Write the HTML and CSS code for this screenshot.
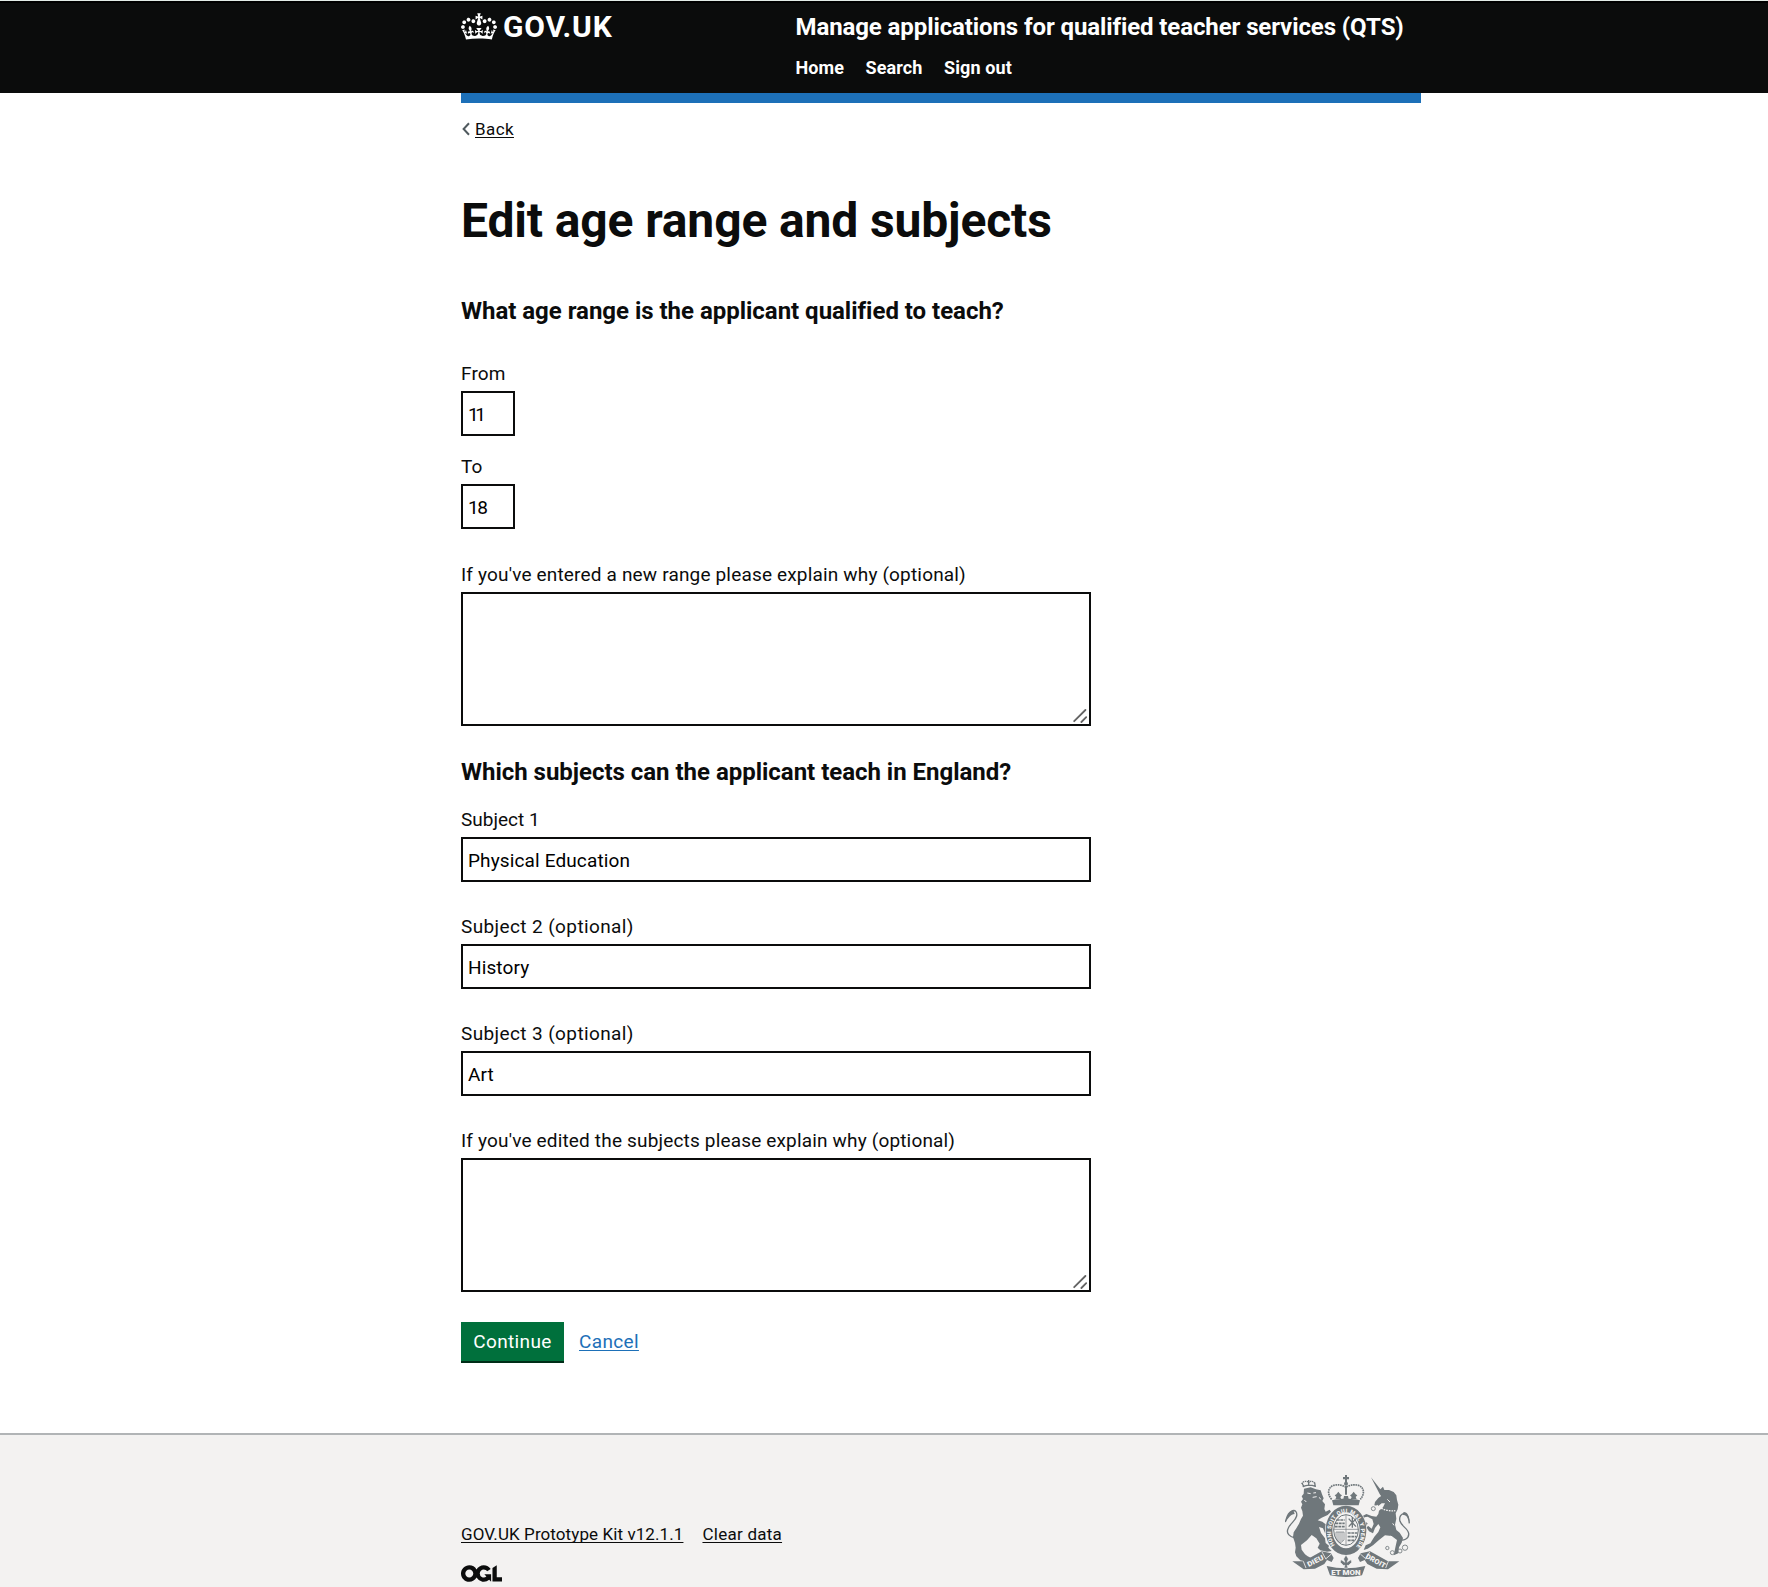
FILE: index.html
```html
<!DOCTYPE html>
<html lang="en">
<head>
<meta charset="utf-8">
<title>Edit age range and subjects</title>
<link rel="stylesheet" href="styles.css">
</head>
<body>
<header class="header">
  <div class="container header-row">
    <a class="logo">
      <svg class="crown" viewBox="0 0 132 97" width="36" height="27"><path fill="currentColor" fill-rule="evenodd" d="M25 30.2c3.5 1.5 7.7-.2 9.1-3.7 1.5-3.6-.2-7.8-3.9-9.2-3.6-1.4-7.6.3-9.1 3.9-1.4 3.5.3 7.5 3.9 9zM9 39.5c3.6 1.5 7.8-.2 9.2-3.7 1.5-3.6-.2-7.8-3.9-9.1-3.6-1.5-7.6.2-9.1 3.8-1.4 3.5.3 7.5 3.8 9zM4.4 57.2c3.5 1.5 7.7-.2 9.1-3.8 1.5-3.6-.2-7.7-3.9-9.1-3.5-1.5-7.6.3-9.1 3.8-1.4 3.5.3 7.6 3.9 9.1zm38.3-21.4c3.5 1.5 7.7-.2 9.1-3.8 1.5-3.6-.2-7.7-3.9-9.1-3.6-1.5-7.6.3-9.1 3.8-1.3 3.6.4 7.7 3.9 9.1zm64.4-5.6c-3.6 1.5-7.8-.2-9.1-3.7-1.5-3.6.2-7.8 3.8-9.2 3.6-1.4 7.7.3 9.2 3.9 1.3 3.5-.4 7.5-3.9 9zm15.9 9.3c-3.6 1.5-7.7-.2-9.1-3.7-1.5-3.6.2-7.8 3.7-9.1 3.6-1.5 7.7.2 9.2 3.8 1.5 3.5-.3 7.5-3.8 9zm4.7 17.7c-3.6 1.5-7.8-.2-9.2-3.8-1.5-3.6.2-7.7 3.9-9.1 3.6-1.5 7.7.3 9.2 3.8 1.3 3.5-.4 7.6-3.9 9.1zM89.3 35.8c-3.6 1.5-7.8-.2-9.2-3.8-1.4-3.6.2-7.7 3.9-9.1 3.6-1.5 7.7.3 9.2 3.8 1.4 3.6-.3 7.7-3.9 9.1zM69.7 17.7l8.9 4.7V9.3l-8.9 2.8c-.2-.3-.5-.6-.9-.9L72.4 0H59.6l3.5 11.2c-.3.3-.6.5-.9.9l-8.8-2.8v13.1l8.8-4.7c.3.3.6.7.9.9l-5 15.4v.1c-.2.8-.4 1.6-.4 2.4 0 4.1 3.1 7.5 7 8.1h.2c.3 0 .7.1 1 .1.4 0 .7 0 1-.1h.2c4-.6 7.1-4.1 7.1-8.1 0-.8-.1-1.7-.4-2.4V34l-5.1-15.4c.4-.2.7-.6 1-.9zM66 92.8c16.9 0 32.8 1.1 47.1 3.2 4-16.9 8.9-26.7 14-33.5l-9.6-3.4c1 4.9 1.1 7.2 0 10.2-1.5-1.4-3-4.3-4.2-8.7L108.6 76c2.8-2 5-3.2 7.5-3.3-4.4 9.4-10 11.9-13.6 11.2-4.3-.8-6.3-4.6-5.6-7.9 1-4.7 5.7-5.9 8-.5 4.3-8.7-3-11.4-7.6-8.8 7.1-7.2 7.9-13.5 2.1-21.1-8 6.1-8.1 12.3-4.5 20.8-4.7-5.4-12.1-2.5-9.5 6.2 3.4-5.2 7.9-2 7.2 3.1-.6 4.3-6.4 7.8-13.5 7.2-10.3-.9-10.9-8-11.2-13.8 2.5-.5 7.1 1.8 11 7.3L80.2 60c-4.1 4.4-8 5.3-12.3 5.4 1.4-4.4 8-11.6 8-11.6H55.5s6.4 7.2 7.9 11.6c-4.2-.1-8-1-12.3-5.4l1.4 16.4c3.9-5.5 8.5-7.7 10.9-7.3-.3 5.8-.9 12.8-11.1 13.8-7.2.6-12.9-2.9-13.5-7.2-.7-5 3.8-8.3 7.1-3.1 2.7-8.7-4.6-11.6-9.4-6.2 3.7-8.5 3.6-14.7-4.6-20.8-5.8 7.6-5 13.9 2.2 21.1-4.7-2.6-11.9.1-7.7 8.8 2.3-5.5 7.1-4.2 8.1.5.7 3.3-1.3 7.1-5.7 7.9-3.5.7-9-1.8-13.5-11.2 2.5.1 4.7 1.3 7.5 3.3l-4.7-15.4c-1.2 4.4-2.7 7.2-4.3 8.7-1.1-3-.9-5.3 0-10.2l-9.5 3.4c5 6.9 9.9 16.7 14 33.5 14.8-2.1 30.8-3.2 47.7-3.2z"/></svg>
      <span class="logo-text">GOV.UK</span>
    </a>
    <div class="service">
      <a class="service-name">Manage applications for qualified teacher services (QTS)</a>
      <nav class="nav"><a>Home</a><a>Search</a><a>Sign out</a></nav>
    </div>
  </div>
</header>
<div class="container">
  <div class="header-bar"></div>
  <a class="back"><svg class="chevron" width="8" height="14" viewBox="0 0 8 14"><path d="M7 1.2 1.6 7 7 12.8" fill="none" stroke="#505a5f" stroke-width="2"/></svg><span class="back-text">Back</span></a>
  <main class="main">
    <h1 class="title">Edit age range and subjects</h1>
    <h2 class="heading">What age range is the applicant qualified to teach?</h2>
    <div class="group group-from">
      <label class="label" for="from">From</label>
      <input class="input input-short input-eleven" id="from" value="11">
    </div>
    <div class="group group-to">
      <label class="label" for="to">To</label>
      <input class="input input-short" id="to" value="18">
    </div>
    <div class="group group-area">
      <label class="label" for="why-range">If you've entered a new range please explain why (optional)</label>
      <div class="area-wrap"><textarea class="area" id="why-range"></textarea><svg class="grip" width="14" height="15" viewBox="0 0 14 15"><path d="M1.2 13.2 12.4 2M8.4 14l4.8-4.8" fill="none" stroke="#636363" stroke-width="1.8" stroke-linecap="round"/></svg></div>
    </div>
    <h2 class="heading heading-subjects">Which subjects can the applicant teach in England?</h2>
    <div class="group">
      <label class="label label-first" for="s1">Subject 1</label>
      <input class="input" id="s1" value="Physical Education">
    </div>
    <div class="group">
      <label class="label label-wide" for="s2">Subject 2 (optional)</label>
      <input class="input" id="s2" value="History">
    </div>
    <div class="group">
      <label class="label label-wide" for="s3">Subject 3 (optional)</label>
      <input class="input" id="s3" value="Art">
    </div>
    <div class="group group-area">
      <label class="label" for="why-subjects">If you've edited the subjects please explain why (optional)</label>
      <div class="area-wrap"><textarea class="area" id="why-subjects"></textarea><svg class="grip" width="14" height="15" viewBox="0 0 14 15"><path d="M1.2 13.2 12.4 2M8.4 14l4.8-4.8" fill="none" stroke="#636363" stroke-width="1.8" stroke-linecap="round"/></svg></div>
    </div>
    <div class="actions"><button class="button">Continue</button><a class="cancel">Cancel</a></div>
  </main>
</div>
<footer class="footer">
  <div class="container footer-row">
    <div class="footer-meta">
      <div class="footer-links"><a class="footer-link">GOV.UK Prototype Kit v12.1.1</a><a class="footer-link link-clear">Clear data</a></div>
      <svg class="ogl" viewBox="0 0 483.2 195.7" width="41" height="17"><path fill="currentColor" d="M421.5 142.8V.1l-50.7 32.3v161.1h112.4v-50.7zm-122.3-9.6A47.12 47.12 0 0 1 221 97.8c0-26 21.1-47.1 47.1-47.1 16.7 0 31.4 8.7 39.7 21.8l42.7-27.2A97.63 97.63 0 0 0 268.1 0c-36.5 0-68.3 20.1-85.1 49.7A98 98 0 0 0 97.8 0C43.9 0 0 43.9 0 97.8s43.9 97.8 97.8 97.8c36.5 0 68.3-20.1 85.1-49.7a97.76 97.76 0 0 0 149.6 25.4l19.4 22.2h3v-87.8h-80l24.3 27.5zM97.8 145c-26 0-47.1-21.1-47.1-47.1s21.1-47.1 47.1-47.1 47.1 21.1 47.1 47.1S123.8 145 97.8 145"/></svg>
    </div>
    <svg class="crest" viewBox="75 165 375 306" width="125" height="102">
      <!-- lion -->
      <g transform="translate(60 150)">
        <path fill="#6f777b" d="M72 56l20-4 16 6 14 3 4 12 5 12-4 8 8 10-2 14 4 8 12-6 4 6-10 10-18 8-12 8 14 4 16 12 6 14 8 8-8 4-4-8-10 4-6-14-12-4 6 18 12 16 2 14 10 8-2 6 10 10-14 2-20-4-8-8 6-12-10-16-14-10-14 16-18 14 2 14 10 14 8 6 12 6 2 8-16 2-20-4-12-12-4-12 2-14-2-14-6-18 2-14 8-12 8-14 6-14 6-10-2-14-4-10 4-10-4-8 6-8-4-8 6-8z"/>
        <path fill="none" stroke="#6f777b" stroke-width="4" d="M72 51l-6-12M106 51l-2-13M68 50c10-5 26-6 38-1M86 30v18"/>
        <path fill="none" stroke="#6f777b" stroke-width="4" stroke-dasharray="4 2" d="M66 42c2-10 16-10 20-4 4-6 16-6 18 3"/>
        <path fill="none" stroke="#f3f2f1" stroke-width="3" d="M82 69l10 2M100 69l8-1M98 82l12-2M73 90l6 6M118 82l4 6"/>
        <path fill="none" stroke="#6f777b" stroke-width="4" d="M46 204c-18-4-28-14-22-28 6-16 22-22 26-38 2-12-4-18-12-16-10 4-16 10-22 34"/>
        <path fill="#6f777b" d="M16 156c6-22 12-32 24-36l4 12c-12 0-18 12-28 24z"/>
      </g>
      <!-- unicorn -->
      <g transform="translate(252 150)">
        <path fill="#6f777b" d="M81 22l28 36 8-8 4 10 14 0 14 6 8 10 2 14 4 14-2 14-6 12 2 16-4 18 4 16 10 8 10 16-4 14-8 14-2 18-14 6 6-28 4-18-16-12-20-2-18 14-18 16-16 10-12 4 6-14 14-6 12-20 12-14 6-14-6-10-10 12-6 16-12-6-8-12 6-4 10 8 6-14-4-14-14-8-10 2-2 10 12 8-4 8-16-10-2-16 18-10 16 6 14 2 6-8 2-10 12-10 6-12-10 0-10 8-12-2 2-10 10-12 8-6-4-6z"/>
        <path fill="none" stroke="#f3f2f1" stroke-width="4" stroke-dasharray="5 3" d="M98 106c18 14 38 18 56 16"/>
        <circle cx="88" cy="116" r="6" fill="#f3f2f1" stroke="#6f777b" stroke-width="2.5"/>
        <path fill="none" stroke="#f3f2f1" stroke-width="3" d="M104 77l5 1M146 160l4 6M138 198l6 4M130 88l8 8"/>
        <path fill="none" stroke="#6f777b" stroke-width="4" d="M160 206c18 10 36 0 34-16-2-14-20-20-26-36-4-14 4-24 14-24 8 2 12 12 14 30"/>
        <path fill="#6f777b" d="M197 160c-4-18-10-26-22-26l4-8c12 0 18 14 18 34z"/>
        <g fill="#f3f2f1" stroke="#6f777b" stroke-width="2.5"><circle cx="130" cy="234" r="5"/><circle cx="145" cy="248" r="6"/><circle cx="168" cy="243" r="6"/><circle cx="183" cy="233" r="8"/></g>
      </g>
      <!-- garter and shield -->
      <ellipse cx="258" cy="331" rx="63" ry="76" fill="#f3f2f1"/>
      <ellipse cx="258" cy="331" rx="51" ry="64" fill="none" stroke="#6f777b" stroke-width="20"/>
      <path id="garter" d="M226 377A45 58 0 1 1 290 377" fill="none"/>
      <text class="motto motto-small"><textPath href="#garter" startOffset="2" textLength="250">HONI SOIT QUI MAL Y PENSE</textPath></text>
      <g stroke="#6f777b" stroke-width="3" fill="none">
        <ellipse cx="258" cy="330" rx="37" ry="46"/>
        <path d="M258 285v90M221 328h74" stroke-width="2"/>
        <path stroke-width="5" stroke-dasharray="9 2" d="M230 300h24M225 310h29M224 320h30M263 339h29M263 350h27M263 361h20"/>
        <path stroke-width="4" d="M266 296l22 24M288 296l-22 24M277 291v32"/>
        <path stroke-width="2" d="M228 336v20l12 14 12-10v-24zM234 336v28M240 336v32M246 336v28"/>
      </g>
      <!-- imperial crown -->
      <path fill="#f3f2f1" d="M206 205q52-30 104 0l-8 50h-90z"/>
      <g fill="#6f777b">
        <path d="M255 165h6v6h6v7h-6v8h-6v-8h-6v-7h6zM216 241l4 15h76l4-15c-26-6-58-6-84 0z"/>
        <circle cx="258" cy="191" r="6"/>
        <path d="M226 238l3-7-5-5 5-3 6-8 6 8 5 3-5 5 3 7zM272 238l3-7-5-5 5-3 6-8 6 8 5 3-5 5 3 7zM250 238l2-10h12l2 10zM255 198h6v26h-6z"/>
      </g>
      <path fill="none" stroke="#6f777b" stroke-width="5" stroke-dasharray="5 2" d="M215 238c-14-16-12-36 6-42 14-4 28 0 37 6 9-6 23-10 37-6 18 6 20 26 6 42"/>
      <!-- scroll -->
      <path fill="#6f777b" d="M97 424l34 0 54-30 28 6 8 14-6 12-14-6-8 12-28 14-34 2zM418 424l-34 0-54-30-28 6-8 14 6 12 14-6 8 12 28 14 34 2zM200 438q58 14 116 0l-10 28q-48 10-96 0z"/>
      <path fill="none" stroke="#f3f2f1" stroke-width="2.5" d="M130 424l8 20M186 396l12 22M385 424l-8 20M329 396l-12 22M198 416l16-14M317 416l-16-14"/>
      <path fill="#6f777b" stroke="#f3f2f1" stroke-width="1.5" d="M258 405l7 12-4 10 12-8 2 8-9 9h-5l3 8h-12l3-8h-5l-9-9 2-8 12 8-4-10z"/>
      <text class="motto" x="214" y="464" textLength="88" lengthAdjust="spacingAndGlyphs">ET MON</text>
      <text class="motto motto-side" transform="translate(146 441) rotate(-27)" textLength="52" lengthAdjust="spacingAndGlyphs">DIEU</text>
      <text class="motto motto-side" transform="translate(315 413) rotate(29)" textLength="66" lengthAdjust="spacingAndGlyphs">DROIT</text>
    </svg>
  </div>
</footer>
</body>
</html>
```

FILE: styles.css
```css
* { box-sizing: border-box; }
html { overflow: hidden; }
body { margin: 0; height: 1587px; overflow: hidden; background: #fff; color: #0b0c0c; font-family: Roboto, "Liberation Sans", sans-serif; font-size: 19px; line-height: 25px; }
.container { width: 960px; margin-left: 461px; }
.header { height: 93px; background: #0b0c0c; border-top: 1px solid #e3ece8; color: #fff; box-shadow: inset 0 2px 0 #000; }
.header-row { display: flex; }
.logo { display: flex; width: 335px; padding-top: 12px; }
.crown { display: block; }
.logo-text { margin-left: 6px; margin-top: -1px; font-size: 30px; line-height: 30px; font-weight: 700; letter-spacing: 0.8px; }
.service { padding-top: 11px; margin-left: -0.5px; }
.service-name { display: block; font-size: 24px; line-height: 30px; font-weight: 700; letter-spacing: -0.1px; white-space: nowrap; }
.nav { display: flex; gap: 21.5px; margin-top: 16px; font-size: 18px; line-height: 20px; font-weight: 700; letter-spacing: 0.1px; }
.header-bar { height: 10px; background: #1d70b8; }
.back { display: flex; width: 60px; margin-top: 15px; font-size: 17px; line-height: 22px; letter-spacing: 0.4px; }
.chevron { display: block; margin: 4px 5px 0 1px; }
.back-text, .cancel, .footer-link { text-decoration: underline; text-decoration-thickness: 1px; text-underline-offset: 2px; text-decoration-skip-ink: none; }
.main { width: 630px; padding-top: 56px; }
.title { margin: 0; font-size: 48px; line-height: 50px; font-weight: 700; letter-spacing: -0.14px; white-space: nowrap; }
.heading { margin: 50px 0 35px; font-size: 24px; line-height: 30px; font-weight: 700; letter-spacing: -0.02px; white-space: nowrap; }
.heading-subjects { margin: 31px 0 20px; }
.group { margin-bottom: 32px; }
.group-from { margin-bottom: 18px; }
.group-to { margin-bottom: 33px; }
.group-area { margin-bottom: 31px; }
.label { display: block; margin-bottom: 5px; letter-spacing: 0.17px; white-space: nowrap; }
.label-first { letter-spacing: 0; }
.label-wide { letter-spacing: 0.39px; }
.input { display: block; width: 100%; height: 45px; padding: 7px 5px 5px; border: 2px solid #0b0c0c; border-radius: 0; background: #fff; color: #000; font: inherit; letter-spacing: 0.13px; }
.input-short { width: 54px; letter-spacing: -1.5px; }
.input-eleven { letter-spacing: -3.5px; }
.area-wrap { position: relative; height: 134px; }
.area { display: block; width: 100%; height: 134px; padding: 5px; border: 2px solid #0b0c0c; border-radius: 0; resize: none; font: inherit; }
.grip { position: absolute; right: 4px; bottom: 3px; }
.actions { display: flex; margin-top: 30px; }
.group-area + .actions { margin-top: -1px; }
.button { width: 103px; height: 39px; padding: 0; border: 0; background: #00703c; box-shadow: 0 2px 0 #002d18; color: #fff; font: inherit; letter-spacing: 0.35px; }
.cancel { margin-left: 15px; padding-top: 7px; color: #1d70b8; letter-spacing: 0.35px; }
.footer { height: 154px; margin-top: 72px; background: #f3f2f1; border-top: 2px solid #b1b4b6; }
.footer-row { display: flex; justify-content: space-between; }
.footer-meta { padding-top: 89px; }
.footer-links { display: flex; gap: 19px; font-size: 17px; line-height: 20px; letter-spacing: 0.09px; }
.link-clear { letter-spacing: 0.25px; }
.ogl { display: block; margin-top: 21px; }
.crest { display: block; margin: 40px 11px 0 0; }
.motto { fill: #f3f2f1; font-size: 22px; font-weight: 900; }
.motto-side { font-size: 21px; }
.motto-small { font-size: 17px; }
```
